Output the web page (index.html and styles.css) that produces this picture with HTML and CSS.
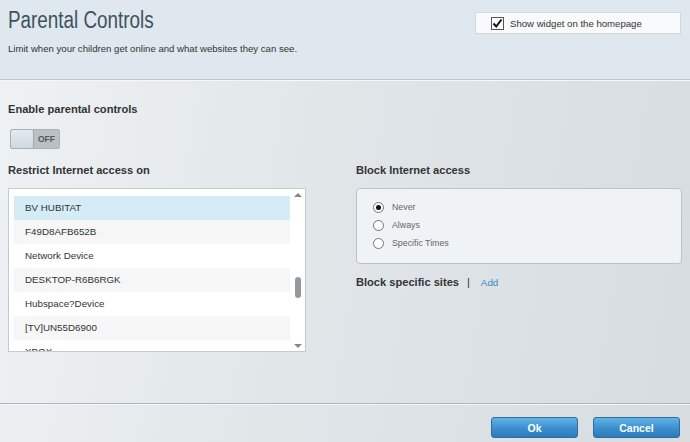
FILE: index.html
```html
<!DOCTYPE html>
<html lang="en">
  <head>
    <meta charset="UTF-8" />
    <title>Parental Controls</title>
    <link rel="stylesheet" href="styles.css">
  </head>
  <body>
    <div class="header">
      <div class="intro">
        <h1>Parental Controls</h1>
        <p class="sub">Limit when your children get online and what websites they can see.</p>
      </div>
      <label class="widget">
        <span class="check">
          <svg width="11" height="11" viewBox="0 0 11 11"><path d="M1.5 5.5 L4.2 8.5 L9.5 1.5" fill="none" stroke="#111" stroke-width="2"/></svg>
        </span>
        Show widget on the homepage
      </label>
    </div>
    <div class="main">
      <h2 class="enable">Enable parental controls</h2>
      <div class="toggle"><span class="knob"></span><span class="off">OFF</span></div>
      <div class="cols">
        <div class="col-left">
          <h2>Restrict Internet access on</h2>
          <div class="listbox">
            <div class="rows">
              <div class="row sel">BV HUBITAT</div>
              <div class="row alt">F49D8AFB652B</div>
              <div class="row">Network Device</div>
              <div class="row alt">DESKTOP-R6B6RGK</div>
              <div class="row">Hubspace?Device</div>
              <div class="row alt">[TV]UN55D6900</div>
              <div class="row">XBOX</div>
            </div>
            <div class="scroll">
              <span class="arrow up"></span>
              <span class="thumb"></span>
              <span class="arrow down"></span>
            </div>
          </div>
        </div>
        <div class="col-right">
          <h2>Block Internet access</h2>
          <div class="radios">
            <div class="radio on"><span class="dot"></span>Never</div>
            <div class="radio"><span class="dot"></span>Always</div>
            <div class="radio"><span class="dot"></span>Specific Times</div>
          </div>
          <div class="sites">
            <h2>Block specific sites</h2>
            <span class="bar">|</span>
            <a class="add">Add</a>
          </div>
        </div>
      </div>
    </div>
    <div class="footer">
      <button class="btn">Ok</button>
      <button class="btn">Cancel</button>
    </div>
  </body>
</html>
```
FILE: styles.css
```css
body {
  margin: 0;
  width: 690px;
  height: 442px;
  overflow: hidden;
  font-family: "Liberation Sans", Arial, sans-serif;
  color: #333;
  background: linear-gradient(100deg, #eef2f4 0%, #e2e7ea 40%, #d6dce0 100%);
}
.header {
  height: 80px;
  box-sizing: border-box;
  padding: 6px 8px 0 8px;
  display: flex;
  justify-content: space-between;
  align-items: flex-start;
  background: #dfe8ee;
  border-bottom: 1px solid #bcc6cc;
  box-shadow: 0 1px 0 #f5f8fa;
}
h1 {
  margin: 0;
  font-size: 23px;
  font-weight: normal;
  line-height: 28px;
  color: #3d5260;
  transform: scaleX(0.82);
  transform-origin: left center;
  white-space: nowrap;
}
.sub {
  margin: 9px 0 0 0;
  font-size: 9.6px;
  color: #333;
}
.widget {
  margin: 6px 1px 0 0;
  width: 206px;
  height: 22px;
  box-sizing: border-box;
  display: flex;
  align-items: center;
  padding-left: 15px;
  gap: 6px;
  background: #f8fafb;
  border: 1px solid #d2d9de;
  font-size: 9.6px;
}
.check {
  width: 11px;
  height: 11px;
  border: 1px solid #555;
  background: #fff;
  display: flex;
}
.main {
  height: 323px;
  padding: 22px 8px 0 8px;
  box-sizing: border-box;
}
h2 {
  margin: 0;
  font-size: 11.1px;
  font-weight: bold;
  color: #333;
  line-height: 14px;
}
.toggle {
  margin: 13px 0 0 2px;
  width: 50px;
  height: 20px;
  display: flex;
  background: #b9c1c6;
  border: 1px solid #a9b2b8;
  box-sizing: border-box;
  border-radius: 2px;
}
.knob {
  width: 22px;
  background: linear-gradient(#e4ebef, #cfd9df);
  border-right: 1px solid #9ea8ae;
  border-radius: 2px;
}
.off {
  flex: 1;
  font-size: 8.5px;
  font-weight: bold;
  color: #555;
  display: flex;
  align-items: center;
  justify-content: center;
}
.cols {
  margin-top: 14px;
  display: flex;
  gap: 50px;
}
.col-left {
  width: 298px;
}
.col-right {
  width: 326px;
}
.listbox {
  margin-top: 11px;
  height: 164px;
  box-sizing: border-box;
  border: 1px solid #c3cbd0;
  background: #fff;
  display: flex;
  overflow: hidden;
}
.rows {
  padding: 7px 0 0 5px;
  width: 276px;
}
.row {
  height: 24px;
  line-height: 24px;
  padding-left: 11px;
  font-size: 9.8px;
  color: #333;
}
.row.sel {
  background: #d5ecf7;
}
.row.alt {
  background: #f6f6f6;
}
.scroll {
  flex: 1;
  display: flex;
  flex-direction: column;
  align-items: center;
  padding: 4px 0 3px 0;
}
.arrow {
  width: 0;
  height: 0;
  border-left: 4px solid transparent;
  border-right: 4px solid transparent;
}
.arrow.up {
  border-bottom: 4px solid #888;
}
.arrow.down {
  border-top: 4px solid #888;
  margin-top: auto;
}
.thumb {
  margin-top: 80px;
  width: 6px;
  height: 21px;
  border-radius: 3px;
  background: #939a9f;
}
.radios {
  margin-top: 11px;
  height: 76px;
  box-sizing: border-box;
  padding: 9px 0 0 16px;
  border: 1px solid #bcc3c8;
  border-radius: 4px;
  background: #eff3f6;
}
.radio {
  display: flex;
  align-items: center;
  gap: 8px;
  height: 18px;
  font-size: 8.8px;
  color: #666;
}
.dot {
  width: 9px;
  height: 9px;
  border: 1px solid #6e7478;
  border-radius: 50%;
  background: #fff;
  position: relative;
}
.radio.on .dot::after {
  content: "";
  position: absolute;
  left: 2px;
  top: 2px;
  width: 5px;
  height: 5px;
  border-radius: 50%;
  background: #111;
}
.sites {
  margin-top: 11px;
  display: flex;
  align-items: center;
}
.bar {
  margin-left: 8px;
  font-size: 11px;
  color: #333;
}
.add {
  margin-left: 11px;
  font-size: 9.8px;
  color: #3a86c4;
}
.footer {
  height: 39px;
  border-top: 1px solid #aeb7bd;
  box-shadow: inset 0 1px 0 #f3f6f8;
  display: flex;
  justify-content: flex-end;
  align-items: flex-start;
  gap: 15px;
  padding: 13px 10px 0 0;
  box-sizing: border-box;
}
.btn {
  width: 87px;
  height: 21px;
  border: 1px solid #2a6ea5;
  border-radius: 3px;
  background: linear-gradient(#62b3e6, #3b8fcc 55%, #2c7bbb);
  color: #fff;
  font-family: "Liberation Sans", Arial, sans-serif;
  font-size: 10.5px;
  font-weight: bold;
  padding: 0;
}
```
